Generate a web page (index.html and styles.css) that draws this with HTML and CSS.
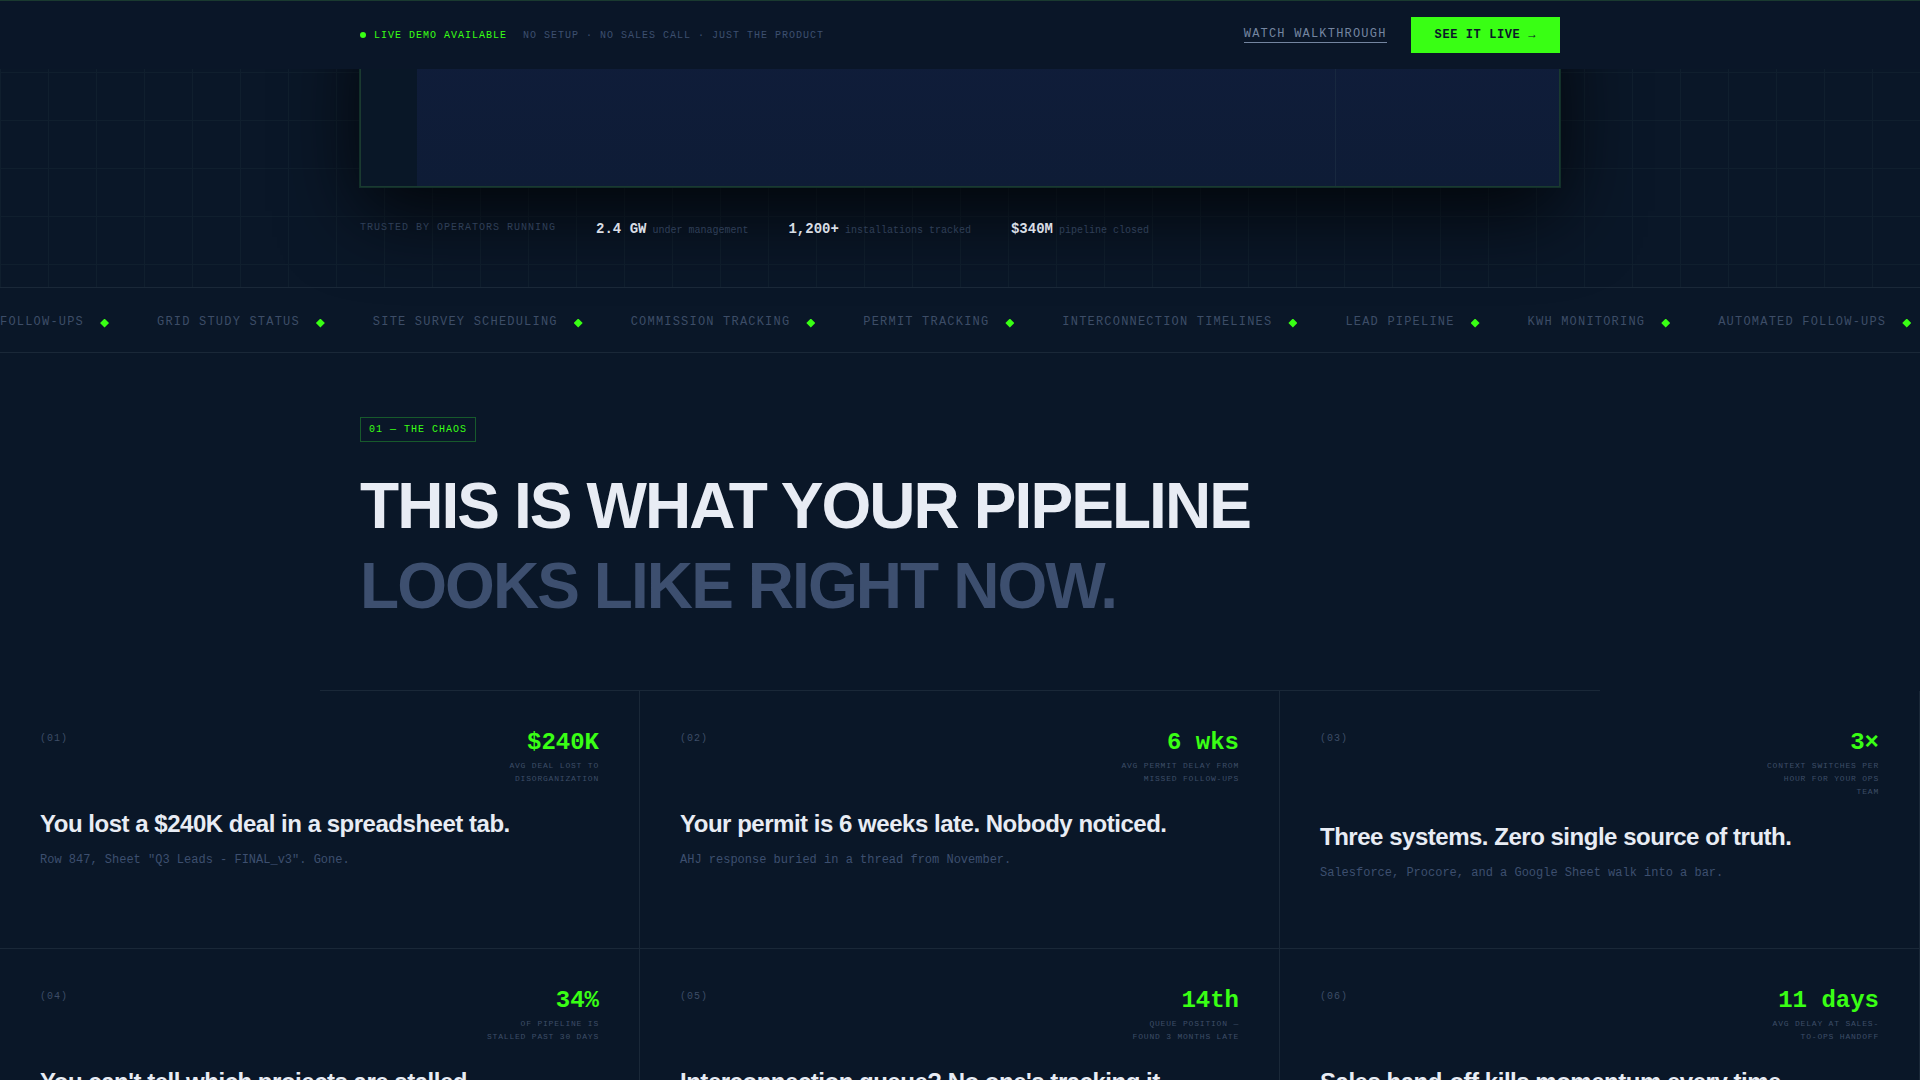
FILE: index.html
```html
<!DOCTYPE html>
<html lang="en">
<head>
<meta charset="utf-8">
<title>Solar operations pipeline</title>
<link rel="stylesheet" href="styles.css">
</head>
<body>
<header class="demo-bar">
  <div class="demo-bar-inner">
    <p class="live"><span class="live-dot"></span>LIVE DEMO AVAILABLE</p>
    <p class="demo-note">NO SETUP · NO SALES CALL · JUST THE PRODUCT</p>
    <a class="walkthrough" href="#walkthrough">WATCH WALKTHROUGH</a>
    <button class="cta" type="button">SEE IT LIVE →</button>
  </div>
</header>
<main>
  <section class="hero">
    <div class="hero-inner">
      <div class="app-window">
        <div class="app-rail"></div>
        <div class="app-main"></div>
        <div class="app-panel"></div>
      </div>
      <div class="trust">
        <p class="trust-label">TRUSTED BY OPERATORS RUNNING</p>
        <p class="trust-stat"><strong>2.4 GW</strong><span>under management</span></p>
        <p class="trust-stat"><strong>1,200+</strong><span>installations tracked</span></p>
        <p class="trust-stat"><strong>$340M</strong><span>pipeline closed</span></p>
      </div>
    </div>
  </section>

  <section class="ticker">
    <ul class="ticker-track">
      <li>AUTOMATED FOLLOW-UPS<span class="diamond"></span></li>
      <li>GRID STUDY STATUS<span class="diamond"></span></li>
      <li>SITE SURVEY SCHEDULING<span class="diamond"></span></li>
      <li>COMMISSION TRACKING<span class="diamond"></span></li>
      <li>PERMIT TRACKING<span class="diamond"></span></li>
      <li>INTERCONNECTION TIMELINES<span class="diamond"></span></li>
      <li>LEAD PIPELINE<span class="diamond"></span></li>
      <li>KWH MONITORING<span class="diamond"></span></li>
      <li>AUTOMATED FOLLOW-UPS<span class="diamond"></span></li>
    </ul>
  </section>

  <section class="chaos">
    <div class="chaos-head">
      <p class="tag">01 — THE CHAOS</p>
      <h2 class="headline">THIS IS WHAT YOUR PIPELINE<br><span class="headline-dim">LOOKS LIKE RIGHT NOW.</span></h2>
    </div>
    <div class="cards">
      <article class="card">
        <div class="card-top"><span class="card-num">(01)</span>
          <div class="stat"><strong>$240K</strong><span>AVG DEAL LOST TO DISORGANIZATION</span></div></div>
        <h3>You lost a $240K deal in a spreadsheet tab.</h3>
        <p>Row 847, Sheet "Q3 Leads - FINAL_v3". Gone.</p>
      </article>
      <article class="card">
        <div class="card-top"><span class="card-num">(02)</span>
          <div class="stat"><strong>6 wks</strong><span>AVG PERMIT DELAY FROM MISSED FOLLOW-UPS</span></div></div>
        <h3>Your permit is 6 weeks late. Nobody noticed.</h3>
        <p>AHJ response buried in a thread from November.</p>
      </article>
      <article class="card">
        <div class="card-top"><span class="card-num">(03)</span>
          <div class="stat"><strong>3×</strong><span>CONTEXT SWITCHES PER HOUR FOR YOUR OPS TEAM</span></div></div>
        <h3>Three systems. Zero single source of truth.</h3>
        <p>Salesforce, Procore, and a Google Sheet walk into a bar.</p>
      </article>
      <article class="card">
        <div class="card-top"><span class="card-num">(04)</span>
          <div class="stat"><strong>34%</strong><span>OF PIPELINE IS STALLED PAST 30 DAYS</span></div></div>
        <h3>You can't tell which projects are stalled.</h3>
      </article>
      <article class="card">
        <div class="card-top"><span class="card-num">(05)</span>
          <div class="stat"><strong>14th</strong><span>QUEUE POSITION — FOUND 3 MONTHS LATE</span></div></div>
        <h3>Interconnection queue? No one's tracking it.</h3>
      </article>
      <article class="card">
        <div class="card-top"><span class="card-num">(06)</span>
          <div class="stat"><strong>11 days</strong><span>AVG DELAY AT SALES-TO-OPS HANDOFF</span></div></div>
        <h3>Sales hand-off kills momentum every time.</h3>
      </article>
    </div>
  </section>
</main>
</body>
</html>
```
FILE: styles.css
```css
:root {
  --bg: #0a1728;
  --line: #1a2838;
  --green: #39ff14;
  --green-line: #1a3a30;
  --text: #e8ecf4;
  --muted: #3d4f6f;
  --faint: #3d4d67;
  --mono: "Liberation Mono", monospace;
  --sans: "Liberation Sans", sans-serif;
}

* { box-sizing: border-box; }

body, p, h2, h3, ul { margin: 0; padding: 0; }

body {
  height: 100vh;
  overflow: hidden;
  background: var(--bg);
  color: var(--text);
  font-family: var(--mono);
}

/* Fixed demo bar */
.demo-bar {
  position: fixed;
  top: 0;
  left: 0;
  right: 0;
  z-index: 10;
  padding: 16px 40px;
  border-top: 1px solid var(--green-line);
  background: #0a1628;
}

.demo-bar-inner {
  display: flex;
  align-items: center;
  max-width: 1200px;
  margin: 0 auto;
}

.live, .demo-note {
  display: flex;
  align-items: center;
  padding-top: 2px;
  font-size: 10px;
  line-height: 16px;
  letter-spacing: 0.1em;
}

.live { gap: 8px; color: var(--green); }

.live-dot {
  width: 6px;
  height: 6px;
  margin-bottom: 2px;
  border-radius: 50%;
  background: var(--green);
}

.demo-note { margin-left: 16px; color: var(--muted); }

.walkthrough {
  margin-left: auto;
  border-bottom: 1px solid #7485a0;
  color: #7485a0;
  font-size: 12px;
  line-height: 15px;
  letter-spacing: 0.1em;
  text-decoration: none;
}

.cta {
  margin-left: 24px;
  padding: 10px 24px;
  border: 0;
  background: var(--green);
  color: var(--bg);
  font: bold 12px/16px var(--mono);
  letter-spacing: 0.05em;
}

/* Hero */
.hero {
  padding: 0 40px 44px;
  background-image:
    linear-gradient(to right, #101f2e 1px, transparent 1px),
    linear-gradient(to bottom, #101f2e 1px, transparent 1px);
  background-size: 48px 48px;
  background-position: 0 24px;
}

.hero-inner { max-width: 1200px; margin: 0 auto; }

.app-window {
  display: grid;
  grid-template-columns: 56px 1fr 224px;
  height: 187px;
  border: 1px solid var(--green-line);
  background: linear-gradient(#101d3b, #0e1c36);
  box-shadow: 0 0 0 1px #12302a, 0 24px 80px #000c;
}

.app-rail { background: #091727; }

.app-panel { border-left: 1px solid #18283f; }

.trust {
  display: flex;
  align-items: flex-start;
  gap: 40px;
  padding-top: 30px;
}

.trust-label {
  color: #2f3f57;
  font-size: 10px;
  line-height: 22px;
  letter-spacing: 0.1em;
}

.trust-stat {
  display: flex;
  align-items: baseline;
  gap: 6px;
  color: #2f3f57;
  font-size: 10px;
  line-height: 24px;
}

.trust-stat strong { color: #d8dde4; font-size: 14px; }

/* Ticker */
.ticker {
  overflow: hidden;
  padding: 26px 0 22px;
  border-top: 1px solid var(--line);
  border-bottom: 1px solid var(--line);
}

.ticker-track {
  display: flex;
  gap: 48px;
  margin-left: -84px;
  list-style: none;
}

.ticker-track li {
  display: flex;
  flex: none;
  align-items: center;
  gap: 16px;
  color: var(--faint);
  font-size: 12px;
  line-height: 16px;
  letter-spacing: 0.1em;
}

.diamond {
  width: 9px;
  height: 9px;
  margin-top: 2px;
  background: var(--green);
  clip-path: polygon(50% 0, 100% 50%, 50% 100%, 0 50%);
}

/* Chaos section */
.chaos-head {
  max-width: 1280px;
  margin: 0 auto;
  padding: 64px 40px;
  border-bottom: 1px solid var(--line);
}

.tag {
  width: fit-content;
  padding: 4px 8px;
  border: 1px solid #175a2c;
  color: var(--green);
  font-size: 10px;
  line-height: 15px;
  letter-spacing: 0.1em;
}

.headline {
  margin-top: 24px;
  font: bold 64px/80px var(--sans);
  letter-spacing: -0.03em;
}

.headline-dim { color: var(--muted); }

.cards {
  display: grid;
  grid-template-columns: repeat(3, 1fr);
}

.card {
  padding: 40px 40px 66px;
  border-right: 1px solid var(--line);
  border-bottom: 1px solid var(--line);
}

.card-top { display: flex; justify-content: space-between; }

.card-num {
  color: var(--faint);
  font-size: 10px;
  line-height: 16px;
  letter-spacing: 0.1em;
}

.stat { max-width: 120px; text-align: right; }

.stat strong {
  display: block;
  margin-bottom: 4px;
  color: var(--green);
  font-size: 24px;
  line-height: 24px;
}

.stat span {
  display: block;
  color: var(--faint);
  font-size: 8px;
  line-height: 13px;
  letter-spacing: 0.1em;
}

.card h3 {
  margin-top: 24px;
  font: bold 24px/30px var(--sans);
  letter-spacing: -0.02em;
}

.card p {
  margin-top: 12px;
  color: var(--muted);
  font-size: 12px;
  line-height: 18px;
}
```
